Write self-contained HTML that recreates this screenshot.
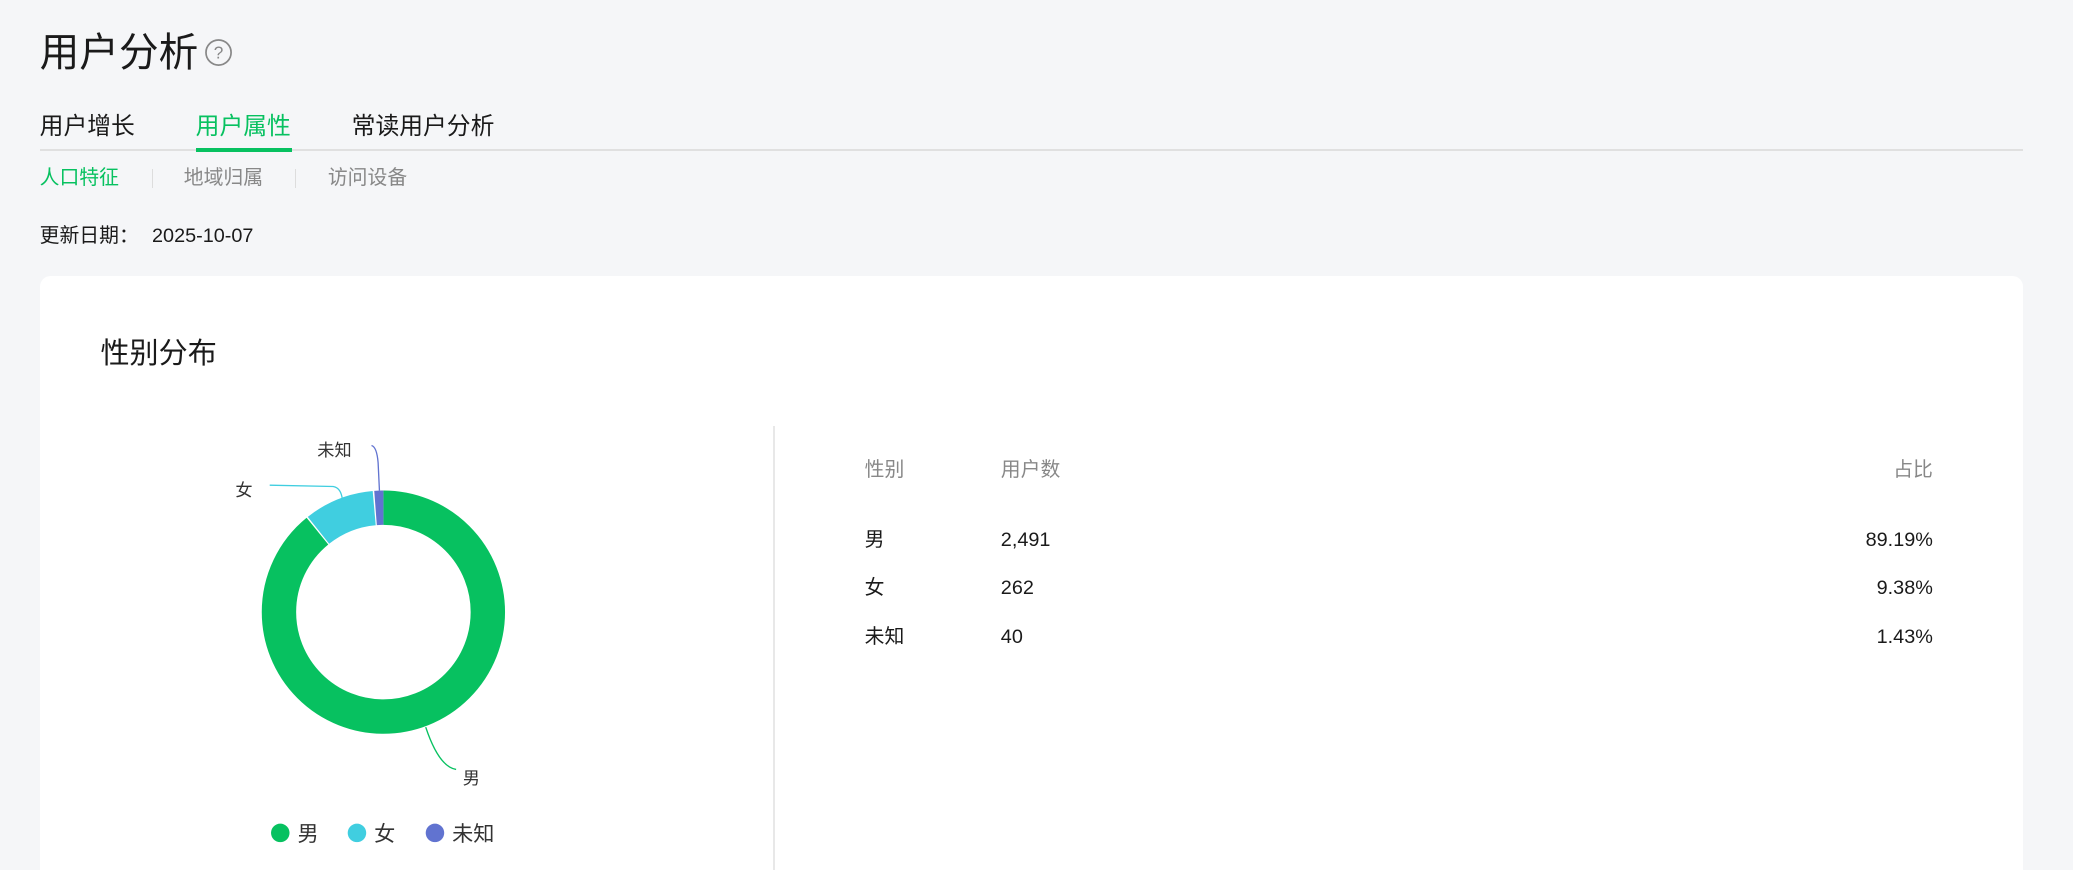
<!DOCTYPE html>
<html><head><meta charset="utf-8">
<style>
html{margin:0;padding:0;width:2073px;height:870px;overflow:hidden;background:#f5f6f8;}
body{margin:0;padding:0;width:1568px;height:658px;overflow:hidden;background:#f5f6f8;zoom:1.32207;font-family:"Liberation Sans","Noto Sans CJK SC",sans-serif;color:#1a1a1a;position:relative;}
.a{position:absolute;white-space:nowrap;line-height:1;}
</style></head><body>
<div class="a" style="left:30px;top:26px;font-size:30px;">用户分析</div>
<svg class="a" style="left:154px;top:29px" width="22" height="22" viewBox="0 0 22 22"><circle cx="11" cy="11" r="9.5" fill="none" stroke="#888" stroke-width="1.3"/><text x="11" y="15.5" text-anchor="middle" font-size="13" fill="#888" font-family="Liberation Sans">?</text></svg>
<div class="a" style="left:30px;top:87px;font-size:18px;">用户增长</div>
<div class="a" style="left:148px;top:87px;font-size:18px;color:#07c160;">用户属性</div>
<div class="a" style="left:266px;top:87px;font-size:18px;">常读用户分析</div>
<div class="a" style="left:30px;top:113px;width:1500px;height:1px;background:#e0e0e0;"></div>
<div class="a" style="left:148px;top:112px;width:73px;height:3px;background:#07c160;"></div>
<div class="a" style="left:30px;top:128px;font-size:15px;color:#07c160;">人口特征</div>
<div class="a" style="left:115px;top:128px;width:1px;height:14px;background:#ddd;"></div>
<div class="a" style="left:139px;top:128px;font-size:15px;color:#888;">地域归属</div>
<div class="a" style="left:223px;top:128px;width:1px;height:14px;background:#ddd;"></div>
<div class="a" style="left:248px;top:128px;font-size:15px;color:#888;">访问设备</div>
<div class="a" style="left:30px;top:172px;font-size:15px;">更新日期：</div>
<div class="a" style="left:115px;top:172px;font-size:15px;">2025-10-07</div>
<div class="a" style="left:30px;top:209px;width:1500px;height:449px;background:#fff;border-radius:8px 8px 0 0;"></div>
<div class="a" style="left:76px;top:257px;font-size:22px;">性别分布</div>
<div class="a" style="left:585px;top:322px;width:1px;height:336px;background:#e8e8e8;"></div>
<svg class="a" style="left:0;top:0" width="600" height="658">
<g transform="rotate(-90 290 463)">
<circle cx="290" cy="463" r="79" fill="none" stroke="#07c160" stroke-width="26" stroke-dasharray="442.2 1000" stroke-dashoffset="0"/>
<circle cx="290" cy="463" r="79" fill="none" stroke="#40cee0" stroke-width="26" stroke-dasharray="46 1000" stroke-dashoffset="-443.2"/>
<circle cx="290" cy="463" r="79" fill="none" stroke="#6173d0" stroke-width="26" stroke-dasharray="6 1000" stroke-dashoffset="-490.2"/>
</g>
<path d="M322 550 Q332 580 345 582" fill="none" stroke="#07c160" stroke-width="1"/>
<path d="M204 367 L252 368 Q258 369 259 378" fill="none" stroke="#40cee0" stroke-width="1"/>
<path d="M281 337 Q285 338 286 350 L287 371" fill="none" stroke="#6173d0" stroke-width="1"/>
<text x="350" y="593" font-size="13" fill="#333">男</text>
<text x="178" y="375" font-size="13" fill="#333">女</text>
<text x="240" y="345" font-size="13" fill="#333">未知</text>
<circle cx="212" cy="630" r="7" fill="#07c160"/><text x="225" y="636" font-size="16" fill="#333">男</text>
<circle cx="270" cy="630" r="7" fill="#40cee0"/><text x="283" y="636" font-size="16" fill="#333">女</text>
<circle cx="329" cy="630" r="7" fill="#6173d0"/><text x="342" y="636" font-size="16" fill="#333">未知</text>
</svg>
<div class="a" style="left:654px;top:349px;font-size:15px;color:#888;">性别</div>
<div class="a" style="left:757px;top:349px;font-size:15px;color:#888;">用户数</div>
<div class="a" style="right:106px;top:349px;font-size:15px;color:#888;">占比</div>
<div class="a" style="left:654px;top:402px;font-size:15px;">男</div>
<div class="a" style="left:757px;top:402px;font-size:15px;">2,491</div>
<div class="a" style="right:106px;top:402px;font-size:15px;">89.19%</div>
<div class="a" style="left:654px;top:438px;font-size:15px;">女</div>
<div class="a" style="left:757px;top:438px;font-size:15px;">262</div>
<div class="a" style="right:106px;top:438px;font-size:15px;">9.38%</div>
<div class="a" style="left:654px;top:475px;font-size:15px;">未知</div>
<div class="a" style="left:757px;top:475px;font-size:15px;">40</div>
<div class="a" style="right:106px;top:475px;font-size:15px;">1.43%</div>
</body></html>
